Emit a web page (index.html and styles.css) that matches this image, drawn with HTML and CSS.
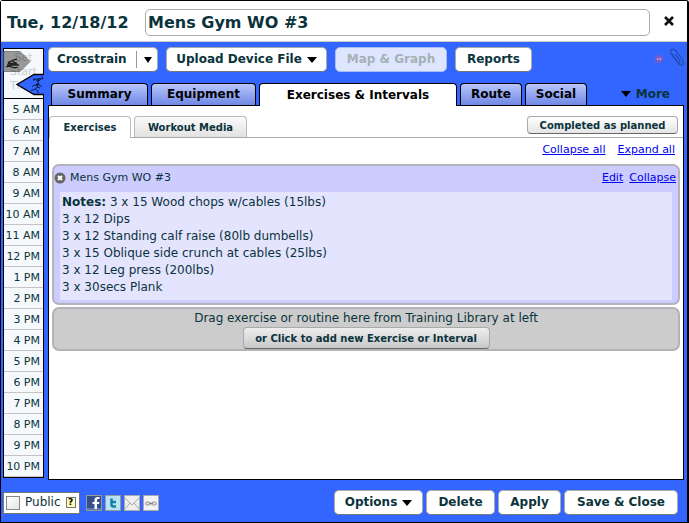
FILE: index.html
```html
<!DOCTYPE html>
<html lang="en">
<head>
<meta charset="utf-8">
<title>Mens Gym WO #3</title>
<link rel="stylesheet" href="styles.css">
</head>
<body>
<div class="window">
  <header class="titlebar">
    <label class="date" for="title">Tue, 12/18/12</label>
    <input class="title" id="title" type="text" value="Mens Gym WO #3">
    <button class="close" type="button" aria-label="Close"><svg width="12" height="12" viewBox="0 0 12 12"><path d="M2 2L10 10M10 2L2 10" stroke="#111" stroke-width="2.6"/></svg></button>
  </header>

  <div class="body">
    <aside class="times">
      <div class="start">
        <svg class="marker" width="41" height="50" viewBox="0 0 41 50">
          <path d="M1 3.500H17L27 13.500L17 23.500H1Z" fill="#999" stroke="#808080"/>
          <path d="M6 14L10 12L14 11M9 13L14 15.500L7 15.500M4 17H16M3 19Q6 17.500 9 19T15 19" fill="none" stroke="#222" stroke-width="1.300"/>
          <circle cx="6" cy="15" r="1.400" fill="#222"/>
        </svg>
        <span class="start-label">Set<br>Start<br>Time</span>
        <svg class="marker" width="41" height="50" viewBox="0 0 41 50">
          <path d="M41 26.500H31L14 36.500L31 46.500H41Z" fill="#36f"/>
          <path d="M41 26.500H31L14 36.500L31 46.500H41" fill="none" stroke="#000" stroke-width="1.300"/>
          <path d="M30.500 31.500L40 30M31 30V33M39.500 28.500V31.500M33 31.500L35 34L38 31M35 34L36 37L39 38.500M36 36L33 37.500M32 37L35 38L32.500 41L35 43V45M32.500 41L28 42.500M32 37L29 38.500M34 39L37 40" fill="none" stroke="#0b1c50"/>
          <circle cx="35.500" cy="32" r="1.200" fill="#0b1c50"/><circle cx="34" cy="36.500" r="1.300" fill="#0b1c50"/>
        </svg>
      </div>
      <ul class="hours">
        <li>5 AM</li><li>6 AM</li><li>7 AM</li><li>8 AM</li><li>9 AM</li><li>10 AM</li><li>11 AM</li><li>12 PM</li><li>1 PM</li><li>2 PM</li><li>3 PM</li><li>4 PM</li><li>5 PM</li><li>6 PM</li><li>7 PM</li><li>8 PM</li><li>9 PM</li><li>10 PM</li>
      </ul>
    </aside>

    <main class="main">
      <div class="toolbar">
        <div class="split">
          <select class="btn type" aria-label="Workout type"><option>Crosstrain</option></select>
          <span class="split-arrow"><svg width="8" height="6" viewBox="0 0 8 6"><path d="M0 0H8L4 6Z"/></svg></span>
        </div>
        <button class="btn upload" type="button">Upload Device File <svg width="10" height="6" viewBox="0 0 10 6"><path d="M0 0H10L5 6Z"/></svg></button>
        <button class="btn map" type="button" disabled>Map &amp; Graph</button>
        <button class="btn reports" type="button">Reports</button>
        <svg class="clip" width="30" height="22" viewBox="0 0 30 22">
          <circle cx="5" cy="12" r="4" fill="#7b5ac8"/><path d="M3 12H4.500M5.500 12H7" stroke="#b5a0e0" stroke-width="2"/>
          <path d="M18 7L25 17Q28 20 29 17Q30 15 28 12L22 4Q19 1 17 3Q16 5 18 8L24 16Q26 17 26 14L21 7" fill="none" stroke="#2449ae" stroke-width="1.200"/>
        </svg>
      </div>

      <nav class="tabs">
        <button class="tab summary" type="button">Summary</button>
        <button class="tab equipment" type="button">Equipment</button>
        <button class="tab active" type="button">Exercises &amp; Intervals</button>
        <button class="tab route" type="button">Route</button>
        <button class="tab social" type="button">Social</button>
        <button class="more" type="button"><svg width="10" height="6" viewBox="0 0 10 6"><path d="M0 0H10L5 6Z"/></svg>More</button>
      </nav>

      <section class="panel">
        <div class="subtabs">
          <button class="subtab current" type="button">Exercises</button>
          <button class="subtab media" type="button">Workout Media</button>
          <button class="small-btn completed" type="button">Completed as planned</button>
        </div>
        <div class="links"><a href="#">Collapse all</a><a href="#">Expand all</a></div>
        <article class="exercise">
          <div class="exercise-head">
            <button class="remove" type="button" aria-label="Remove"><svg width="12" height="12" viewBox="0 0 12 12"><circle cx="6" cy="6" r="5.500" fill="#666"/><path d="M4 4L8 8M8 4L4 8" stroke="#fff" stroke-width="2"/></svg></button>
            <span class="name">Mens Gym WO #3</span>
            <a href="#">Edit</a><a href="#">Collapse</a>
          </div>
          <p class="notes"><b>Notes:</b> 3 x 15 Wood chops w/cables (15lbs)<br>3 x 12 Dips<br>3 x 12 Standing calf raise (80lb dumbells)<br>3 x 15 Oblique side crunch at cables (25lbs)<br>3 x 12 Leg press (200lbs)<br>3 x 30secs Plank</p>
        </article>
        <div class="drop">
          <span>Drag exercise or routine here from Training Library at left</span>
          <button class="small-btn add" type="button">or Click to add new Exercise or Interval</button>
        </div>
      </section>
    </main>
  </div>

  <footer class="footer">
    <div class="public"><input type="checkbox" id="public"><label for="public">Public</label><button class="help" type="button">?</button></div>
    <div class="share">
      <button type="button" aria-label="Facebook"><svg width="16" height="16" viewBox="0 0 16 16"><rect width="16" height="16" fill="#999"/><rect x="1" y="1" width="14" height="14" fill="#344f8f"/><path d="M1 13H15V15H1Z" fill="#6078b0"/><path d="M8.500 14V9H6.500V7H8.500V5Q8.500 2 11.500 2H13.500V4H12Q11 4 11 5V7H13.500L13 9H11V14Z" fill="#fff"/></svg></button>
      <button type="button" aria-label="Twitter"><svg width="16" height="16" viewBox="0 0 16 16"><rect width="16" height="16" fill="#999"/><rect x="1" y="1" width="14" height="14" fill="#b9e4ef"/><path d="M6.500 3.500V9.500Q6.500 11.500 8.500 11.500H11M6.500 7H11" fill="none" stroke="#1680a8" stroke-width="2.500"/></svg></button>
      <button type="button" aria-label="Email"><svg width="16" height="16" viewBox="0 0 16 16"><rect width="16" height="16" fill="#aaa"/><rect x="1" y="1" width="14" height="14" fill="#eee"/><path d="M1 3L8 10L15 3M1 14L6 8M15 14L10 8" fill="none" stroke="#aaa"/></svg></button>
      <button type="button" aria-label="Link"><svg width="16" height="16" viewBox="0 0 16 16"><rect width="16" height="16" fill="#aaa"/><rect x="1" y="1" width="14" height="14" fill="#f3f3f3"/><rect x="2.500" y="7" width="5" height="3" rx="1.500" fill="#ddd" stroke="#999"/><rect x="8.500" y="7" width="5" height="3" rx="1.500" fill="#ddd" stroke="#999"/><path d="M6 8.500H10" stroke="#888"/></svg></button>
    </div>
    <div class="actions">
      <button class="btn options" type="button">Options <svg width="10" height="6" viewBox="0 0 10 6"><path d="M0 0H10L5 6Z"/></svg></button>
      <button class="btn delete" type="button">Delete</button>
      <button class="btn apply" type="button">Apply</button>
      <button class="btn save" type="button">Save &amp; Close</button>
    </div>
  </footer>
</div>
</body>
</html>
```
FILE: styles.css
```css
* { box-sizing: border-box; }
body { margin: 0; font: 12px/17px Verdana, "DejaVu Sans", sans-serif; color: #0b333c; }
button, input, select { font: inherit; color: inherit; margin: 0; padding: 0; border: 0; background: none; }
svg { display: block; flex: none; }
a { color: #0000f0; font-size: 11px; }

.window { min-height: 100vh; display: flex; flex-direction: column; background: #36f; border: 1px solid #000; border-right-width: 2px; border-radius: 3px 3px 0 0; }

.titlebar { height: 41px; display: flex; align-items: center; padding: 3px 12px 0 6px; background: #fff; border-bottom: 1px solid #ccc; }
.date { font-size: 16px; font-weight: bold; width: 138px; white-space: nowrap; }
.title { flex: 1; min-width: 0; height: 27px; border: 1px solid #aaa; border-radius: 5px; padding: 0 2px; font-size: 16px; font-weight: bold; }
.close { margin: 0 0 3px 13px; }

.body { flex: 1; display: flex; gap: 4px; padding: 5px 3px 0 2px; }
.times { width: 41px; flex: none; align-self: flex-start; margin-top: 1px; border: 1px solid #000; background: #f5f9fc; }
.start { height: 50px; position: relative; border-bottom: 1px solid #000; }
.start-label { position: relative; display: block; padding-top: 2px; text-align: center; font-size: 11px; line-height: 14px; color: #000; opacity: .18; }
.marker { position: absolute; left: -1px; top: -1px; }
.hours { list-style: none; margin: 0; padding: 0; }
.hours li { height: 21px; padding-right: 3px; text-align: right; font-size: 11px; line-height: 21px; border-bottom: 1px solid #c4c4c4; white-space: nowrap; }

.main { flex: 1; min-width: 0; display: flex; flex-direction: column; }
.btn { height: 25px; padding: 0; display: flex; align-items: center; justify-content: center; gap: 5px; white-space: nowrap; font-weight: bold; background: #fff; border: 1px solid #aaa; border-bottom-color: #777; border-radius: 5px; }
.btn svg, .split-arrow svg, .more svg { fill: #000; }
.toolbar { display: flex; gap: 8px; }
.split { position: relative; }
.type { width: 110px; padding: 0 0 0 8px; appearance: none; }
.split-arrow { position: absolute; right: 0; top: 4px; height: 17px; width: 22px; display: flex; align-items: center; justify-content: center; border-left: 1px solid #999; pointer-events: none; }
.upload { width: 161px; }
.map { width: 112px; background: #dee6ff; color: #a5b1b5; border-color: #a9bdf5; }
.reports { width: 77px; }
.clip { margin-left: auto; }

.tabs { display: flex; gap: 3px; margin-top: 11px; padding-left: 3px; height: 22px; }
.tab { border: 1px solid #000; border-bottom: 0; border-radius: 4px 4px 0 0; background: linear-gradient(#b9c6fb, #7088e4); color: #000; font-weight: bold; white-space: nowrap; }
.summary { width: 97px; }
.equipment { width: 105px; }
.active { width: 198px; background: #fff; height: 23px; position: relative; z-index: 1; }
.route { width: 62px; }
.social { width: 62px; }
.more { margin-left: auto; padding-right: 14px; display: flex; align-items: center; gap: 5px; font-weight: bold; }

.panel { flex: 1; background: #fff; border: 1px solid #000; }
.subtabs { display: flex; align-items: flex-start; gap: 3px; height: 32px; padding: 10px 5px 0 0; border-bottom: 1px solid #aaa; }
.subtab { height: 21px; border: 1px solid #bbb; border-bottom: 0; border-radius: 4px 4px 0 0; font-size: 10px; font-weight: bold; background: linear-gradient(#fafafa, #e2e2e2); }
.current { width: 82px; height: 22px; background: #fff; }
.media { width: 113px; }
.small-btn { height: 18px; padding: 0; font-size: 10px; line-height: 15px; font-weight: bold; border: 1px solid #aaa; border-bottom-color: #666; border-radius: 4px; background: linear-gradient(#fff, #e4e4e4); white-space: nowrap; }
.completed { width: 151px; margin-left: auto; }
.links { height: 26px; display: flex; justify-content: flex-end; gap: 12px; padding: 3px 8px 0 0; }
.exercise { margin: 0 3px 2px; border: 2px solid #b3b3bd; border-radius: 7px; background: #ccf; padding: 0 6px 3px; }
.exercise-head { height: 26px; display: flex; align-items: center; gap: 6px; margin: 0 -4px 0 -6px; padding-bottom: 3px; }
.name { flex: 1; font-size: 11px; }
.remove { margin-right: -2px; }
.notes { margin: 0; padding: 2px 2px 4px; background: #e4e4ff; }
.drop { margin: 0 3px; height: 44px; display: flex; flex-direction: column; align-items: center; border: 2px solid #b3b3b8; border-radius: 7px; background: #ccc; padding-top: 1px; }
.add { width: 247px; height: 22px; flex: none; line-height: 19px; background: linear-gradient(#eee, #c8c8c8); }

.footer { display: flex; align-items: center; margin-top: 10px; padding: 0 9px 7px 2px; }
.public { width: 77px; height: 22px; display: flex; align-items: center; gap: 5px; padding-left: 2px; background: #fff; border: 1px solid #777; }
.public input { appearance: none; width: 14px; height: 14px; flex: none; border: 1px solid #888; background: linear-gradient(135deg, #fff, #e4e4e4); }
.help { width: 10px; height: 11px; border: 1px solid #777; background: #ffffb8; color: #000; font-size: 9px; line-height: 9px; font-weight: bold; }
.share { display: flex; gap: 3px; margin-left: 6px; }
.actions { display: flex; gap: 3px; margin-left: auto; }
.options { width: 89px; }
.delete { width: 69px; }
.apply { width: 63px; }
.save { width: 114px; }
```
